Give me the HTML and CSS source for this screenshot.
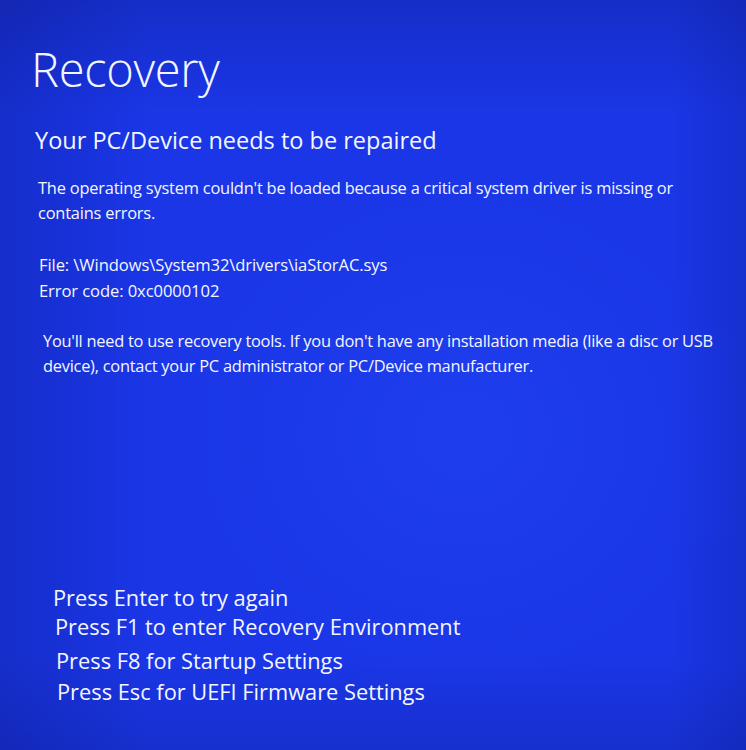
FILE: index.html
```html
<!DOCTYPE html>
<html lang="en">
<head>
<meta charset="utf-8">
<title>Recovery</title>
<link rel="stylesheet" href="styles.css">
</head>
<body>
<main class="screen">
  <h1 class="title">Recovery</h1>
  <h2 class="subtitle">Your PC/Device needs to be repaired</h2>
  <p class="msg">The operating system couldn't be loaded because a critical system driver is missing or contains errors.</p>
  <div class="details">
    <div>File: \Windows\System32\drivers\iaStorAC.sys</div>
    <div>Error code: 0xc0000102</div>
  </div>
  <p class="msg msg-tools">You'll need to use recovery tools. If you don't have any installation media (like a disc or USB device), contact your PC administrator or PC/Device manufacturer.</p>
  <ul class="keys">
    <li class="k1">Press Enter to try again</li>
    <li class="k2">Press F1 to enter Recovery Environment</li>
    <li class="k3">Press F8 for Startup Settings</li>
    <li class="k4">Press Esc for UEFI Firmware Settings</li>
  </ul>
</main>
</body>
</html>
```
FILE: styles.css
```css
html, body {
  margin: 0;
  padding: 0;
  height: 100%;
}
body {
  background: #1a33e6;
  color: #f4f6ff;
  font-family: "Open Sans", "Noto Sans", sans-serif;
  overflow: hidden;
}
.screen {
  width: 746px;
  height: 750px;
  box-sizing: border-box;
  padding: 38px 20px 0 31px;
  display: flex;
  flex-direction: column;
  background:
    radial-gradient(ellipse 420px 380px at 62% 58%, rgba(40, 80, 255, 0.3), rgba(40, 80, 255, 0) 70%),
    linear-gradient(90deg, rgba(10, 20, 120, 0.25) 0%, rgba(10, 20, 120, 0) 20%, rgba(10, 20, 120, 0) 90%, rgba(10, 20, 120, 0.2) 100%),
    linear-gradient(180deg, rgba(10, 20, 110, 0.25) 0%, rgba(10, 20, 110, 0) 15%, rgba(10, 20, 110, 0) 88%, rgba(10, 20, 110, 0.2) 100%),
    #1a36e6;
}
.title {
  margin: 0;
  font-weight: 300;
  font-size: 47px;
  line-height: 62px;
  letter-spacing: -0.3px;
}
.subtitle {
  margin: 25px 0 0 4px;
  font-weight: 400;
  font-size: 23.5px;
  line-height: 30px;
}
.msg {
  margin: 21px 0 0 7px;
  font-size: 16.4px;
  line-height: 24.5px;
  letter-spacing: -0.2px;
  width: 660px;
}
.details {
  margin: 27px 0 0 8px;
  font-size: 16.6px;
  line-height: 26px;
  letter-spacing: -0.1px;
}
.msg-tools {
  margin: 25px 0 0 12px;
  width: 700px;
  font-size: 16.4px;
  letter-spacing: -0.25px;
}
.keys {
  list-style: none;
  margin: 204px 0 0 0;
  padding: 0;
  font-size: 21.8px;
  line-height: 31px;
}
.k1 { margin-left: 22px; margin-bottom: -2px; }
.k2 { margin-left: 24px; margin-bottom: 3px; }
.k3 { margin-left: 25px; }
.k4 { margin-left: 26px; }
```
